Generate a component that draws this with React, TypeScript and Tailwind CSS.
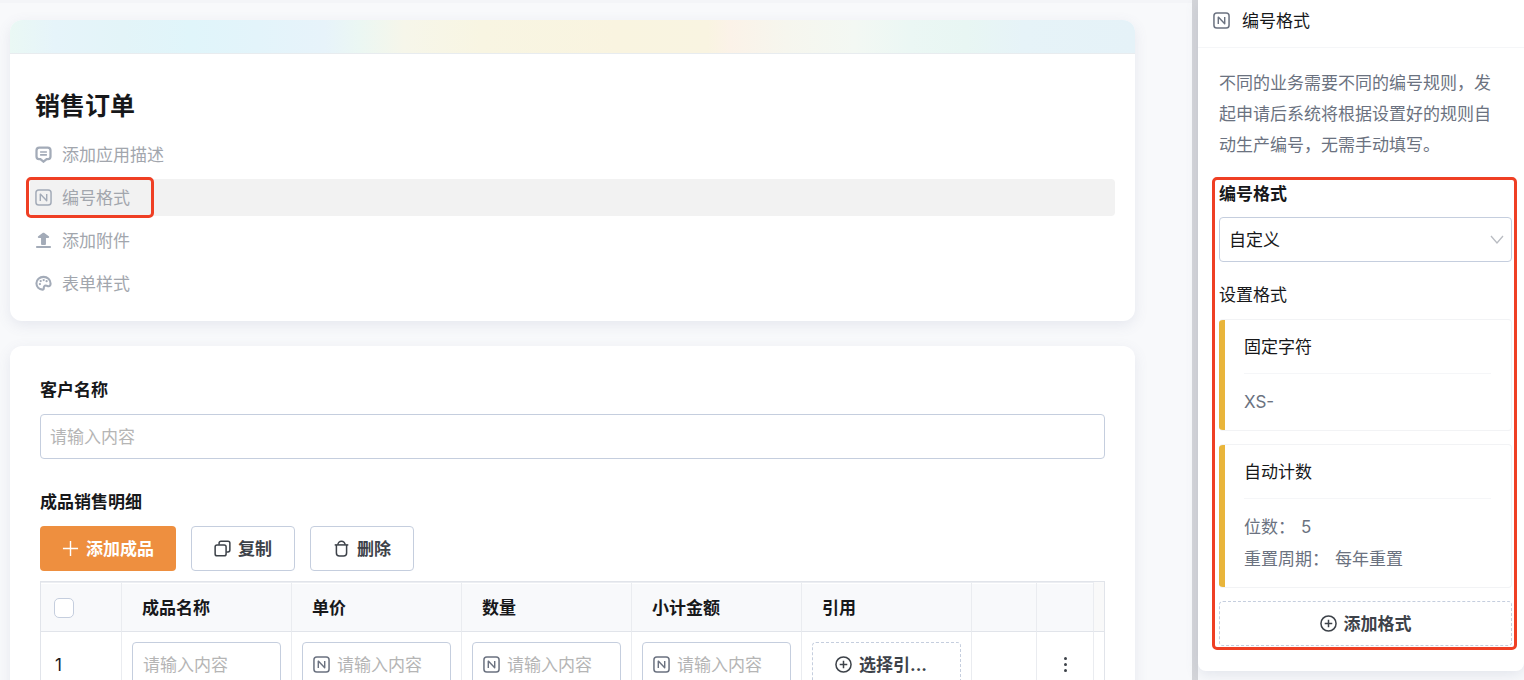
import { useState, ReactNode } from 'react';

type IconProps = { className?: string };

function NumberIcon({ className = '' }: IconProps) {
    return (
        <svg viewBox="0 0 18 18" fill="none" stroke="currentColor" className={className} aria-hidden="true">
            <rect x="1" y="1" width="16" height="16" rx="3" strokeWidth="1.6" />
            <path d="M5.6 12.8V5.4L12.4 12.4V5.2" strokeWidth="1.5" strokeLinejoin="round" />
        </svg>
    );
}

function CommentIcon({ className = '' }: IconProps) {
    return (
        <svg viewBox="0 0 18 18" fill="none" stroke="currentColor" className={className} aria-hidden="true">
            <path d="M4.6 1.8h8.800a3 3 0 0 1 3 3v6.200a3 3 0 0 1-2.700 3h-1.400L9 16.600 5.700 14H4.300a3 3 0 0 1-2.700-3V4.800a3 3 0 0 1 3-3z" strokeWidth="2.400" />
            <path d="M5.400 6.300h7.200M5.400 9.400h7.200" strokeWidth="1.600" />
        </svg>
    );
}

function UploadIcon({ className = '' }: IconProps) {
    return (
        <svg viewBox="0 0 18 18" fill="currentColor" className={className} aria-hidden="true">
            <path d="M8.400.9a1 1 0 0 1 1.200 0l5 3.700c.8.700.4 1.800-.6 1.800h-2.400v6.300a1 1 0 0 1-1 1H7.400a1 1 0 0 1-1-1V6.400H4c-1 0-1.400-1.100-.6-1.800z" />
            <rect x="1" y="14.800" width="16" height="2.200" rx="1" />
        </svg>
    );
}

function PaletteIcon({ className = '' }: IconProps) {
    return (
        <svg viewBox="0 0 18 18" fill="none" stroke="currentColor" className={className} aria-hidden="true">
            <path d="M9 2C4.800 2 1.500 5 1.500 8.800c0 3.700 2.900 6.400 6.400 6.700 1 .1 1.500-.6 1.400-1.500-.2-1.700.6-2.900 2.300-2.800 1.300.1 2 .9 3.100.7 1.100-.2 1.800-1.400 1.800-2.900C16.500 5 13.200 2 9 2z" strokeWidth="2.200" />
            <g fill="currentColor" stroke="none">
                <circle cx="5.200" cy="9.600" r="1.200" />
                <circle cx="6" cy="6.400" r="1.200" />
                <circle cx="9.200" cy="5.400" r="1.200" />
                <circle cx="12.300" cy="6.600" r="1.200" />
            </g>
        </svg>
    );
}

function PlusIcon({ className = '' }: IconProps) {
    return (
        <svg viewBox="0 0 18 18" fill="none" stroke="currentColor" className={className} aria-hidden="true">
            <path d="M9 1v16M1 9h16" strokeWidth="1.500" />
        </svg>
    );
}

function PlusCircleIcon({ className = '' }: IconProps) {
    return (
        <svg viewBox="0 0 18 18" fill="none" stroke="currentColor" className={className} aria-hidden="true">
            <circle cx="9" cy="9" r="8" strokeWidth="1.600" />
            <path d="M9 5v8M5 9h8" strokeWidth="1.600" />
        </svg>
    );
}

function CopyIcon({ className = '' }: IconProps) {
    return (
        <svg viewBox="0 0 18 18" fill="none" stroke="currentColor" className={className} aria-hidden="true">
            <rect x="1.200" y="5.200" width="11.600" height="11.600" rx="2" strokeWidth="1.600" />
            <path d="M5.400 5V3.200a2 2 0 0 1 2-2h7.400a2 2 0 0 1 2 2v7.400a2 2 0 0 1-2 2h-1.800" strokeWidth="1.600" />
        </svg>
    );
}

function TrashIcon({ className = '' }: IconProps) {
    return (
        <svg viewBox="0 0 18 18" fill="none" stroke="currentColor" className={className} aria-hidden="true">
            <path d="M1.800 5.200h14.400" strokeWidth="1.600" />
            <path d="M5.200 5a3.800 3.800 0 0 1 7.600 0" strokeWidth="1.600" />
            <path d="M3.600 5.200v8.600a3.200 3.200 0 0 0 3.200 3.200h4.400a3.200 3.200 0 0 0 3.200-3.200V5.200" strokeWidth="1.600" />
        </svg>
    );
}

const settings = [
    { label: '添加应用描述', icon: CommentIcon, active: false },
    { label: '编号格式', icon: NumberIcon, active: true },
    { label: '添加附件', icon: UploadIcon, active: false },
    { label: '表单样式', icon: PaletteIcon, active: false },
];

const columns = [
    { title: '成品名称', numeric: false },
    { title: '单价', numeric: true },
    { title: '数量', numeric: true },
    { title: '小计金额', numeric: true },
];

const th = 'h-[50px] border-t border-r border-b border-t-[#eceef2] border-r-[#eaecf0] border-b-[#e1e4ea] bg-[#f8f9fb] shadow-[inset_0_1px_0_#ffffff] pt-[2px] text-left font-bold';
const td = 'h-[66px] border-r border-b border-r-[#eaecf0] border-b-[#e1e4ea]';
const outlineButton = 'flex h-[45px] items-center gap-[7px] rounded border border-[#c5cede] bg-white px-[22px] font-bold text-[#3d4249]';

function Highlight({ className }: { className: string }) {
    return <span className={`pointer-events-none absolute rounded-[5px] border-3 border-[#ef3f24] ${className}`} />;
}

function FormatCard({ title, children }: { title: string; children: ReactNode }) {
    return (
        <li className="flex overflow-hidden rounded border border-l-0 border-[#f2f3f5]">
            <span className="-my-px w-[6px] shrink-0 bg-[#e9b53b]" />
            <div className="flex-1 pr-5 pl-[19px]">
                <h4 className="flex h-[54px] items-center border-b border-[#f5f6f8]">{title}</h4>
                <div className="py-3 leading-8 text-[#6b7280]">{children}</div>
            </div>
        </li>
    );
}

function FormHeader() {
    return (
        <section className="shrink-0 overflow-hidden rounded-xl bg-white shadow-[0_4px_14px_rgba(100,110,150,0.12)]">
            <div className="h-[34px] border-b border-[#e8ecef] bg-[linear-gradient(90deg,#eaf8f4_0%,#e6f4fa_4%,#e3f4f8_10%,#e0f5fa_16%,#e3f4fa_22%,#e7f3fa_28%,#ebf7f3_31%,#f6f6ea_35%,#f8f5e2_42%,#f9f4e0_54%,#f9f4e1_62%,#fbf2e8_64%,#f6f6ee_69%,#f3f8f3_75%,#ebf7f4_80%,#e8f6f3_85%,#e6f3f8_90%,#e5f2f8_100%)]" />
            <div className="px-5 pt-[34px] pb-[19px]">
                <h1 className="mb-3 px-[5px] text-[25px] leading-9 font-bold">销售订单</h1>
                <ul className="flex flex-col gap-[6px]">
                    {settings.map(({ label, icon: Icon, active }) => (
                        <li key={label} className="relative">
                            <button
                                type="button"
                                className={`flex h-[37px] w-full items-center gap-[10px] rounded px-[5px] text-[#a2a6ad] ${active ? 'bg-[#f2f2f2]' : ''}`}
                            >
                                <Icon className="h-[17px] w-[17px] text-[#a3abb8]" />
                                {label}
                            </button>
                            {active && <Highlight className="-top-[2px] -left-1 h-[41px] w-32" />}
                        </li>
                    ))}
                </ul>
            </div>
        </section>
    );
}

function OrderForm() {
    const [allChecked, setAllChecked] = useState(false);

    return (
        <section className="shrink-0 rounded-xl bg-white px-[30px] pt-8 pb-8 shadow-[0_4px_14px_rgba(100,110,150,0.12)]">
            <label htmlFor="customer" className="block font-bold">客户名称</label>
            <input
                id="customer"
                type="text"
                placeholder="请输入内容"
                className="mt-3 h-[45px] w-full rounded border border-[#c5cede] px-[9px] placeholder-[#b5b5b5] outline-none"
            />

            <h2 className="mt-[31px] font-bold">成品销售明细</h2>
            <div className="mt-3 flex gap-[15px]">
                <button type="button" className="flex h-[45px] items-center gap-[7px] rounded bg-[#ee8f3f] px-[22px] font-bold text-white">
                    <PlusIcon className="h-[17px] w-[17px]" />
                    添加成品
                </button>
                <button type="button" className={outlineButton}>
                    <CopyIcon className="h-[17px] w-[17px]" />
                    复制
                </button>
                <button type="button" className={outlineButton}>
                    <TrashIcon className="h-[17px] w-[17px]" />
                    删除
                </button>
            </div>

            <div className="mt-[10px] border border-[#e1e4ea]">
                <table className="w-full table-fixed border-separate border-spacing-0">
                    <thead>
                        <tr>
                            <th className={`${th} w-[81px] pl-[13px]`}>
                                <input
                                    type="checkbox"
                                    aria-label="全选"
                                    checked={allChecked}
                                    onChange={(e) => setAllChecked(e.target.checked)}
                                    className="block h-5 w-5 appearance-none rounded-[5px] border border-[#c5cede] bg-white checked:bg-[#ee8f3f]"
                                />
                            </th>
                            {columns.map(({ title }) => (
                                <th key={title} className={`${th} w-[170px] pl-5`}>{title}</th>
                            ))}
                            <th className={`${th} w-[170px] pl-5`}>引用</th>
                            <th className={`${th} w-[65px]`} />
                            <th className={`${th} w-[57px]`} />
                            <th className="border-b border-[#e1e4ea] bg-[#f9f9f9]" />
                        </tr>
                    </thead>
                    <tbody>
                        <tr>
                            <td className={`${td} pl-[14px]`}>1</td>
                            {columns.map(({ title, numeric }) => (
                                <td key={title} className={`${td} px-[10px]`}>
                                    <label className="flex h-[45px] items-center gap-[7px] rounded border border-[#c5cede] px-[10px]">
                                        {numeric && <NumberIcon className="h-[17px] w-[17px] shrink-0 text-[#6b7280]" />}
                                        <input
                                            type="text"
                                            aria-label={title}
                                            placeholder="请输入内容"
                                            className="w-full min-w-0 bg-transparent placeholder-[#b5b5b5] outline-none"
                                        />
                                    </label>
                                </td>
                            ))}
                            <td className={`${td} px-[10px]`}>
                                <button type="button" className="flex h-[45px] w-full items-center gap-[7px] rounded border border-dashed border-[#c5cede] px-[22px] font-bold text-[#3d4249]">
                                    <PlusCircleIcon className="h-[17px] w-[17px] shrink-0" />
                                    选择引...
                                </button>
                            </td>
                            <td className={td} />
                            <td className={td}>
                                <button type="button" aria-label="更多" className="mx-auto flex flex-col gap-[3px]">
                                    <span className="h-[3px] w-[3px] rounded-full bg-[#3d4249]" />
                                    <span className="h-[3px] w-[3px] rounded-full bg-[#3d4249]" />
                                    <span className="h-[3px] w-[3px] rounded-full bg-[#3d4249]" />
                                </button>
                            </td>
                            <td className="border-b border-[#e1e4ea]" />
                        </tr>
                    </tbody>
                </table>
            </div>
        </section>
    );
}

function NumberPanel() {
    const [format, setFormat] = useState('custom');

    return (
        <aside className="w-[332px] shrink-0 border-l-6 border-[#d4d5d9] bg-[#f8f9fb]">
            <div className="rounded-b-lg bg-white pb-[25px] shadow-[0_4px_14px_rgba(100,110,150,0.14)]">
                <header className="flex h-12 items-center gap-3 border-b border-[#f5f6f8] px-[15px] pb-[6px]">
                    <NumberIcon className="h-[17px] w-[17px] text-[#6b7280]" />
                    <h2>编号格式</h2>
                </header>

                <p className="mt-5 pr-6 pl-[21px] leading-[31px] text-[#6b7280]">
                    不同的业务需要不同的编号规则，发起申请后系统将根据设置好的规则自动生产编号，无需手动填写。
                </p>

                <div className="relative mt-[21px] mr-3 ml-[21px]">
                    <label htmlFor="format" className="block font-bold">编号格式</label>
                    <div className="relative mt-[11px]">
                        <select
                            id="format"
                            value={format}
                            onChange={(e) => setFormat(e.target.value)}
                            className="h-[45px] w-full appearance-none rounded border border-[#c5cede] bg-white px-[9px] outline-none"
                        >
                            <option value="custom">自定义</option>
                            <option value="default">系统默认</option>
                        </select>
                        <svg viewBox="0 0 14 10" fill="none" stroke="#b9bcc2" className="pointer-events-none absolute top-[18px] right-2 h-[10px] w-[14px]" aria-hidden="true">
                            <path d="M1 1l6 7 6-7" strokeWidth="1.300" />
                        </svg>
                    </div>

                    <h3 className="mt-[21px]">设置格式</h3>
                    <ul className="mt-3 flex flex-col gap-[13px]">
                        <FormatCard title="固定字符">XS-</FormatCard>
                        <FormatCard title="自动计数">
                            <p className="flex gap-[6px]"><span>位数：</span><span>5</span></p>
                            <p className="flex gap-[6px]"><span>重置周期：</span><span>每年重置</span></p>
                        </FormatCard>
                    </ul>
                    <button type="button" className="mt-[13px] flex h-[45px] w-full items-center justify-center gap-[7px] rounded border border-dashed border-[#c5cede] font-bold text-[#3d4249]">
                        <PlusCircleIcon className="h-[17px] w-[17px]" />
                        添加格式
                    </button>
                    <Highlight className="-top-[5px] -right-[5px] -bottom-1 -left-[7px]" />
                </div>
            </div>
        </aside>
    );
}

export default function App() {
    return (
        <div className="flex h-screen overflow-hidden bg-[#f8f9fb] font-['Inter','Noto_Sans_CJK_SC',sans-serif] text-[17px] leading-6 text-[#17181a]">
            <main className="flex min-w-0 flex-1 flex-col gap-[25px] border-t-3 border-[#f4f5f8] pt-[17px] pr-[57px] pl-[10px]">
                <FormHeader />
                <OrderForm />
            </main>
            <NumberPanel />
        </div>
    );
}
